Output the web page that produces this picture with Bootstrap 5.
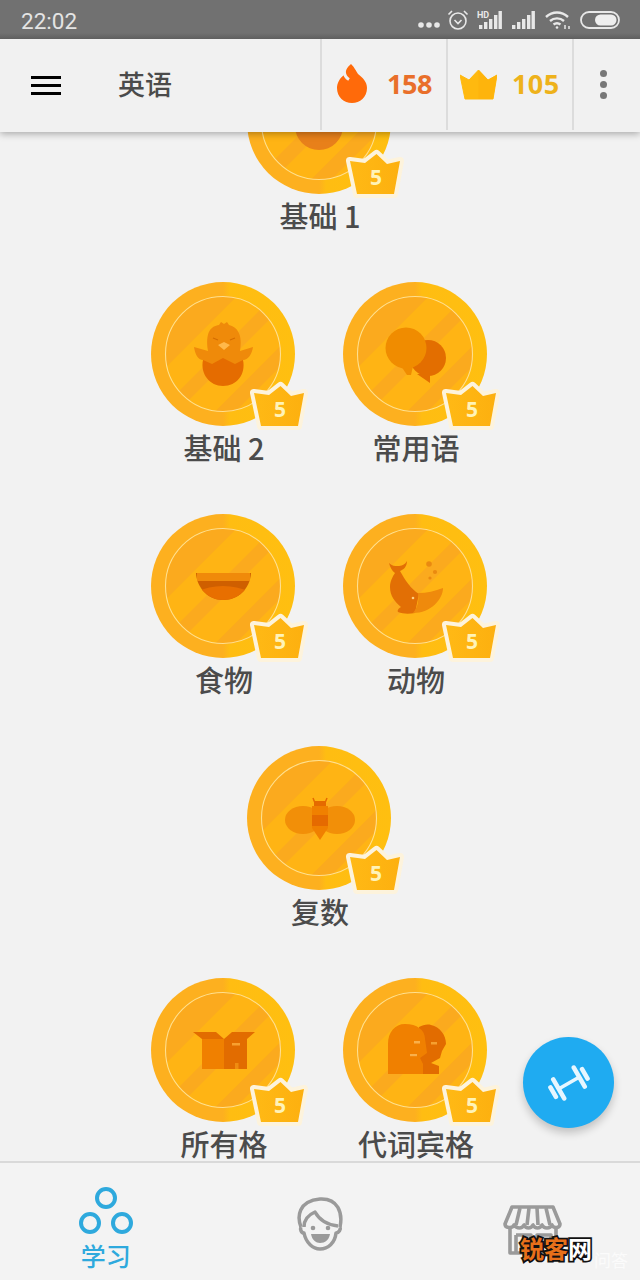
<!DOCTYPE html>
<html lang="zh">
<head>
<meta charset="utf-8">
<title>英语</title>
<link href="https://cdn.jsdelivr.net/npm/bootstrap@5.3.0/dist/css/bootstrap.min.css" rel="stylesheet">
<style>
body{background:#f2f2f2;font-family:"Noto Sans CJK SC","Noto Sans",sans-serif;color:#4b4b4b}
.app-shell{width:640px;height:1280px;overflow:hidden;position:relative}
.status-strip{height:39px;background:linear-gradient(#717171 0,#717171 33px,#5f5f5f 39px);color:#e4e4e4;padding:0 20px 0 21px;flex:none;position:relative;z-index:6}
.status-time{font:400 22.500px/1 Roboto,sans-serif;margin-top:3px}
.si-a{margin-left:7px}.si-b{margin-left:8px}.si-c{margin-left:10px}.si-d{margin-left:9px}
.top-bar{height:93px;background:#f1f1f1;box-shadow:0 2px 7px rgba(0,0,0,.3);flex:none;z-index:5;padding:0!important;position:relative}
.menu-btn{width:30px;margin-left:31px;margin-right:57px;gap:5px}
.menu-btn span{display:block;height:3px;background:#000}
.course-name{font-size:27px;font-weight:500;line-height:1;width:202px;color:#4b4b4b;margin-bottom:4px}
.stat-cell{height:91px;width:126px;border-left:2px solid #dcdcdc;align-self:flex-start}
.stat-num{font:700 27px/1 "Noto Sans",sans-serif;letter-spacing:-.5px;margin-bottom:2px}
.stat-wide{letter-spacing:.4px}
.flame-art{margin-left:15px;margin-right:18px;margin-top:-2px}
.crown-nav{margin-left:12px;margin-right:15px}
.more-cell{width:67px;height:91px;border-left:2px solid #dcdcdc;align-self:flex-start;gap:4px;padding-right:7px}
.more-cell span{width:7px;height:7px;border-radius:50%;background:#777}
.tree-area{flex:1;min-height:0}
.tree-list{margin-top:-82px}
.tree-row{height:232px;gap:48px;padding-right:2px}
.tree-row-end{height:183px}
.skill-tile{width:144px;position:relative}
.coin-art{width:144px;height:144px;display:block}
.crown-art{position:absolute;left:99px;top:98px;width:54px;height:48px;overflow:visible}
.crown-num{position:absolute;left:99px;top:98px;width:60px;text-align:center;font:700 21px/58px "Noto Sans",sans-serif;color:#fff3b8}
.skill-name{position:absolute;left:-39px;right:-41px;top:147px;text-align:center;font-size:29px;font-weight:500;line-height:36px;color:#4b4b4b;white-space:nowrap}
.bottom-tabs{height:119px;background:#f3f3f3;border-top:2px solid #d9d9d9;flex:none;position:relative}
.tab-slot{flex:1 1 0;height:100%}
.tab-learn{color:#2ea9dd;font-size:25px;font-weight:500;line-height:1;margin-top:6px}
.tab-a{padding-top:22px;margin-left:-1px;margin-right:1px}
.tab-b{padding-top:34px}
.tab-c{padding-top:42px}
.fab-btn{position:absolute;left:523px;top:1037px;width:91px;height:91px;border-radius:50%;background:#1fabf1;box-shadow:0 5px 9px rgba(0,0,0,.2);z-index:4;border:0;padding:0}
.wm{position:absolute;left:520px;top:1234px;font-size:24px;font-weight:700;line-height:28px;z-index:6;white-space:nowrap;display:flex}
.wm-orange{color:#e8701a;-webkit-text-stroke:3.500px #111;paint-order:stroke fill}
.wm-white{color:#fff;-webkit-text-stroke:3.500px #111;paint-order:stroke fill}
.wm-faint{position:absolute;left:594px;top:1248px;font-size:17px;line-height:24px;color:#fbfbfb;z-index:5}
</style>
</head>
<body>
<svg width="0" height="0" style="position:absolute">
<defs>
<linearGradient id="rimFill" x1="0" x2="1" y1="0" y2="0"><stop offset="0" stop-color="#fdb01f"/><stop offset=".5" stop-color="#fdb01f"/><stop offset=".55" stop-color="#ffbd12"/><stop offset="1" stop-color="#ffbf10"/></linearGradient>
<linearGradient id="crownFill" x1="0" x2="1" y1="0" y2="0"><stop offset="0" stop-color="#ffb915"/><stop offset="1" stop-color="#fdb00f"/></linearGradient>
<clipPath id="innerClip"><circle cx="72" cy="72" r="58"/></clipPath>
<clipPath id="bowlClip"><path d="M45 59H100C99 75 87 86 72 86 58 86 46 75 45 59Z"/></clipPath>
<symbol id="coinBase" viewBox="0 0 144 144">
<circle cx="72" cy="72" r="72" fill="url(#rimFill)"/>
<circle cx="72" cy="72" r="58" fill="#ffb414"/>
<g clip-path="url(#innerClip)" fill="#fbaa1e">
<rect x="0" y="-20" width="41" height="184" transform="rotate(45 72 72)"/>
<rect x="67" y="-20" width="13.500" height="184" transform="rotate(45 72 72)"/>
<rect x="107" y="-20" width="14.500" height="184" transform="rotate(45 72 72)"/>
</g>
<circle cx="72" cy="72" r="57.500" fill="none" stroke="#ffe08f" stroke-width="1.100"/>
</symbol>
<symbol id="crownBase" viewBox="-6 -6 66 60">
<path d="M4 13 L19 15 L30.500 6 L41 16 L54 13 L48 46 L11 46 Z" fill="#fdf3dc" stroke="#fdf3dc" stroke-width="8" stroke-linejoin="round"/>
<path d="M4 13 L19 15 L30.500 6 L41 16 L54 13 L48 46 L11 46 Z" fill="url(#crownFill)"/>
</symbol>
</defs>
</svg>

<div class="app-shell d-flex flex-column">
  <div class="status-strip d-flex align-items-center justify-content-between">
    <span class="status-time">22:02</span>
    <div class="d-flex align-items-center">
      <svg width="22" height="8" viewBox="0 0 22 8" style="margin-top:10px"><g fill="#e8e8e8"><circle cx="3" cy="4" r="2.800"/><circle cx="11" cy="4" r="2.800"/><circle cx="19" cy="4" r="2.800"/></g></svg>
      <svg class="si-a" width="22" height="22" viewBox="0 0 22 22" fill="none" stroke="#e8e8e8" stroke-width="1.600"><circle cx="11" cy="12" r="8"/><path d="M7.500 11l3.500 3.500L14.500 11"/><path d="M1.500 5.500L5 2M20.500 5.500L17 2"/></svg>
      <svg class="si-b" width="26" height="20" viewBox="0 0 26 20" fill="#e8e8e8"><rect x="2" y="15" width="3.400" height="4"/><rect x="7" y="12" width="3.400" height="7"/><rect x="12" y="9" width="3.400" height="10"/><rect x="17" y="5" width="3.400" height="14"/><rect x="21.500" y="1" width="3.400" height="18"/><text x="0" y="8" font-family="Roboto,sans-serif" font-size="9" font-weight="700">HD</text></svg>
      <svg class="si-b" width="24" height="20" viewBox="0 0 24 20" fill="#e8e8e8"><rect x="1" y="15" width="3.400" height="4"/><rect x="6" y="12" width="3.400" height="7"/><rect x="11" y="9" width="3.400" height="10"/><rect x="16" y="5" width="3.400" height="14"/><rect x="20.500" y="1" width="3.400" height="18"/></svg>
      <svg class="si-c" width="26" height="20" viewBox="0 0 26 20" fill="none" stroke="#e8e8e8" stroke-width="2.400"><path d="M1 7c6.500-6 15.500-6 22 0"/><path d="M5 11c4-3.500 10-3.500 14 0"/><path d="M8.500 14.500c2-1.500 5-1.500 7 0"/><circle cx="12" cy="17.500" r="1.300" fill="#e8e8e8" stroke="none"/><path d="M20 15v4M24 16v3" stroke-width="1.500"/></svg>
      <svg class="si-d" width="40" height="18" viewBox="0 0 40 18"><rect x="1" y="1" width="38" height="16" rx="8" fill="none" stroke="#e8e8e8" stroke-width="1.800"/><rect x="15" y="3.500" width="21.500" height="11" rx="5.500" fill="#eeeeee"/></svg>
    </div>
  </div>

  <nav class="navbar top-bar flex-nowrap align-items-center justify-content-start">
    <div class="menu-btn d-flex flex-column"><span></span><span></span><span></span></div>
    <div class="course-name">英语</div>
    <div class="stat-cell d-flex align-items-center">
      <svg class="flame-art" width="32" height="39" viewBox="0 0 32 39"><path d="M14 0C18 4 19 7 21 10 26 14 30 18 30 24 30 33 23 39 15 39 7 39 0 33 0 24 0 19 3 14 7 11 8 7 10 3 14 0Z" fill="#ff6a0a"/><path d="M11 -1C6 5 6 12 12 15.500" fill="none" stroke="#f1f1f1" stroke-width="3"/></svg>
      <span class="stat-num" style="color:#e96f2a">158</span>
    </div>
    <div class="stat-cell d-flex align-items-center">
      <svg class="crown-nav" width="37" height="30" viewBox="0 0 37 30"><path d="M0 5 L9 10 L18.500 0 L28 10 L37 5 L33 29 L5 29 Z" fill="#ffb90f" stroke="#ffb90f" stroke-linejoin="round"/><path d="M18.500 0 L28 10 L37 5 L33 29 L18.500 29 Z" fill="#feb40c"/></svg>
      <span class="stat-num stat-wide" style="color:#eeb21b">105</span>
    </div>
    <div class="more-cell d-flex flex-column align-items-center justify-content-center"><span></span><span></span><span></span></div>
  </nav>

  <main class="tree-area">
    <div class="tree-list">
      <div class="tree-row d-flex justify-content-center">
        <div class="skill-tile">
          <svg class="coin-art" viewBox="0 0 144 144"><use href="#coinBase" width="144" height="144"/><circle cx="72" cy="76" r="24" fill="#e8801a"/></svg>
          <svg class="crown-art" viewBox="0 0 54 48"><use href="#crownBase" x="-6" y="-6" width="66" height="60"/></svg><span class="crown-num">5</span>
          <div class="skill-name">基础 1</div>
        </div>
      </div>
      <div class="tree-row d-flex justify-content-center">
        <div class="skill-tile">
          <svg class="coin-art" viewBox="0 0 144 144"><use href="#coinBase" width="144" height="144"/>
            <path d="M43 65L57 69C54 50 60 44 68 43L70 40 73 42 76 40 78 43C86 45 92 52 89 69L102 65C101 72 97 78 92 78V84H52V78C47 78 44 72 43 65Z" fill="#ef8a0a"/>
            <path d="M52 78L61 82 72 76 84 82 92 78C95 92 86 104 72 104 59 104 49 92 52 78Z" fill="#e56c00"/>
            <path d="M67 63L73 60 79 63 73 68Z" fill="#ffb84a"/>
            <path d="M62 56l5 2M84 56l-5 2" stroke="#d46c00" stroke-width="1.200" fill="none"/></svg>
          <svg class="crown-art" viewBox="0 0 54 48"><use href="#crownBase" x="-6" y="-6" width="66" height="60"/></svg><span class="crown-num">5</span>
          <div class="skill-name">基础 2</div>
        </div>
        <div class="skill-tile">
          <svg class="coin-art" viewBox="0 0 144 144"><use href="#coinBase" width="144" height="144"/>
            <circle cx="85" cy="76" r="18" fill="#e36e00"/><path d="M74 92L87 92 87 101Z" fill="#e36e00"/>
            <circle cx="63" cy="66" r="20.500" fill="#f08c00"/><path d="M58 84L70 84 68 93 64 93Z" fill="#f08c00"/></svg>
          <svg class="crown-art" viewBox="0 0 54 48"><use href="#crownBase" x="-6" y="-6" width="66" height="60"/></svg><span class="crown-num">5</span>
          <div class="skill-name">常用语</div>
        </div>
      </div>
      <div class="tree-row d-flex justify-content-center">
        <div class="skill-tile">
          <svg class="coin-art" viewBox="0 0 144 144"><use href="#coinBase" width="144" height="144"/>
            <path d="M45 59H100C99 75 87 86 72 86 58 86 46 75 45 59Z" fill="#cf5f00"/>
            <ellipse cx="72" cy="92" rx="36" ry="20" fill="#e86f00" clip-path="url(#bowlClip)"/>
            <rect x="46" y="59" width="53" height="8" fill="#f08a0a"/></svg>
          <svg class="crown-art" viewBox="0 0 54 48"><use href="#crownBase" x="-6" y="-6" width="66" height="60"/></svg><span class="crown-num">5</span>
          <div class="skill-name">食物</div>
        </div>
        <div class="skill-tile">
          <svg class="coin-art" viewBox="0 0 144 144"><use href="#coinBase" width="144" height="144"/>
            <path d="M46 49C49 52 52 52 55 52 58 52 62 51 64 47 64 53 60 56 57 57 62 66 68 75 76 80L72 99C66 100 60 100 55 98 54 96 56 94 58 93 52 88 47 82 47 73 47 67 50 62 52 59 49 57 47 53 46 49Z" fill="#e26f05"/>
            <path d="M75 79C84 79 92 77 100 74 100 85 88 99 70 99 75 93 76 86 75 79Z" fill="#ef8a0c"/>
            <circle cx="70" cy="84" r="1.300" fill="#ffcf80"/>
            <circle cx="86" cy="50" r="2.800" fill="#ea8a10"/><circle cx="92" cy="58" r="2.100" fill="#ea8a10"/><circle cx="87" cy="64" r="1.600" fill="#ea8a10"/></svg>
          <svg class="crown-art" viewBox="0 0 54 48"><use href="#crownBase" x="-6" y="-6" width="66" height="60"/></svg><span class="crown-num">5</span>
          <div class="skill-name">动物</div>
        </div>
      </div>
      <div class="tree-row d-flex justify-content-center">
        <div class="skill-tile">
          <svg class="coin-art" viewBox="0 0 144 144"><use href="#coinBase" width="144" height="144"/>
            <ellipse cx="56" cy="74" rx="18" ry="14" fill="#f28f08"/><ellipse cx="90" cy="74" rx="18" ry="14" fill="#f28f08"/>
            <path d="M65 60H81V82L73 94 65 82Z" fill="#f08000"/><rect x="65" y="69" width="16" height="11" fill="#e56a00"/>
            <path d="M66 52l2 5h10l2-5" fill="none" stroke="#e56a00" stroke-width="1.500"/><rect x="67" y="55" width="12" height="5" fill="#e56a00"/></svg>
          <svg class="crown-art" viewBox="0 0 54 48"><use href="#crownBase" x="-6" y="-6" width="66" height="60"/></svg><span class="crown-num">5</span>
          <div class="skill-name">复数</div>
        </div>
      </div>
      <div class="tree-row tree-row-end d-flex justify-content-center">
        <div class="skill-tile">
          <svg class="coin-art" viewBox="0 0 144 144"><use href="#coinBase" width="144" height="144"/>
            <path d="M51 61H73V91H51Z" fill="#f08000"/><path d="M73 61H96V91H73Z" fill="#e26c00"/>
            <path d="M42 54H65L73 61 51 61Z" fill="#e26c00"/><path d="M73 61L81 54H104L96 61Z" fill="#e26c00"/>
            <rect x="81" y="65" width="8" height="2.500" fill="#f7a030"/><rect x="84" y="85" width="3.500" height="6" fill="#f08c10"/></svg>
          <svg class="crown-art" viewBox="0 0 54 48"><use href="#crownBase" x="-6" y="-6" width="66" height="60"/></svg><span class="crown-num">5</span>
          <div class="skill-name">所有格</div>
        </div>
        <div class="skill-tile">
          <svg class="coin-art" viewBox="0 0 144 144"><use href="#coinBase" width="144" height="144"/>
            <path d="M76 49C80 47 84 46 88 47 97 49 103 57 103 66L99 73 97 80 88 85 96 88V96H76Z" fill="#e26c00"/>
            <path d="M45 96V66C45 54 52 46 62 46 74 46 82 52 82 61L84 75 77 80 80 86V96Z" fill="#f08000"/>
            <rect x="71" y="63" width="6" height="2.500" fill="#f9b04a"/><rect x="67" y="76" width="7" height="2.200" fill="#f9b04a"/><rect x="88" y="64" width="6" height="2.500" fill="#f5a030"/></svg>
          <svg class="crown-art" viewBox="0 0 54 48"><use href="#crownBase" x="-6" y="-6" width="66" height="60"/></svg><span class="crown-num">5</span>
          <div class="skill-name">代词宾格</div>
        </div>
      </div>
    </div>
  </main>

  <button class="fab-btn d-flex align-items-center justify-content-center" type="button" aria-label="练习">
    <svg width="42" height="42" viewBox="0 0 46 46" fill="none" stroke="#e6f6ff" stroke-linecap="round"><g transform="rotate(-30 23 23)"><path d="M3 17v12M10 11v24M36 11v24M43 17v12" stroke-width="5"/><path d="M12 23h22" stroke-width="4"/></g></svg>
  </button>

  <div class="bottom-tabs d-flex">
    <div class="tab-slot tab-a d-flex flex-column align-items-center">
      <svg width="56" height="52" viewBox="0 0 56 52" fill="none" stroke="#2ea9dd" stroke-width="4"><circle cx="28" cy="13" r="9"/><circle cx="12" cy="38" r="9"/><circle cx="44" cy="38" r="9"/></svg>
      <span class="tab-learn">学习</span>
    </div>
    <div class="tab-slot tab-b d-flex justify-content-center">
      <svg width="48" height="54" viewBox="0 0 48 54" fill="none" stroke="#9a9a9a" stroke-width="3.500" stroke-linejoin="round"><path d="M5 30C1 20 2 4 24 2 42 1 47 16 44 30"/><path d="M5 30C4 32 5 36 8 36 10 46 17 52 24 52 32 52 39 46 40 36 43 36 45 32 44 30"/><path d="M8 30C8 22 12 18 19 15 24 24 32 28 42 29"/><circle cx="17" cy="31" r="2.300" fill="#9a9a9a" stroke="none"/><circle cx="32" cy="31" r="2.300" fill="#9a9a9a" stroke="none"/><path d="M15 37H34C33 43 29 46 24 46 20 46 16 43 15 37Z" fill="#9a9a9a" stroke="none"/></svg>
    </div>
    <div class="tab-slot tab-c d-flex justify-content-center">
      <svg width="60" height="50" viewBox="0 0 60 50" fill="none" stroke="#9a9a9a" stroke-width="3.600" stroke-linejoin="round"><path d="M9 2H50L57 19C57 23 51 24 49 20 47 24 41 24 39 20 37 24 32 24 30 20 28 24 23 24 21 20 19 24 14 24 11 20 9 24 2 23 2 19Z"/><path d="M17 3L13 20M26 3L24 20M34 3L35 20M43 3L47 20"/><path d="M7 24V48H53V24"/><path d="M13 30H28V48M13 30V48"/><rect x="34" y="30" width="14" height="10"/></svg>
    </div>
  </div>

  <span class="wm-faint">问答</span>
  <div class="wm"><span class="wm-orange">锐客</span><span class="wm-white">网</span></div>
</div>
<script src="https://cdn.jsdelivr.net/npm/bootstrap@5.3.0/dist/js/bootstrap.bundle.min.js"></script>
</body>
</html>
